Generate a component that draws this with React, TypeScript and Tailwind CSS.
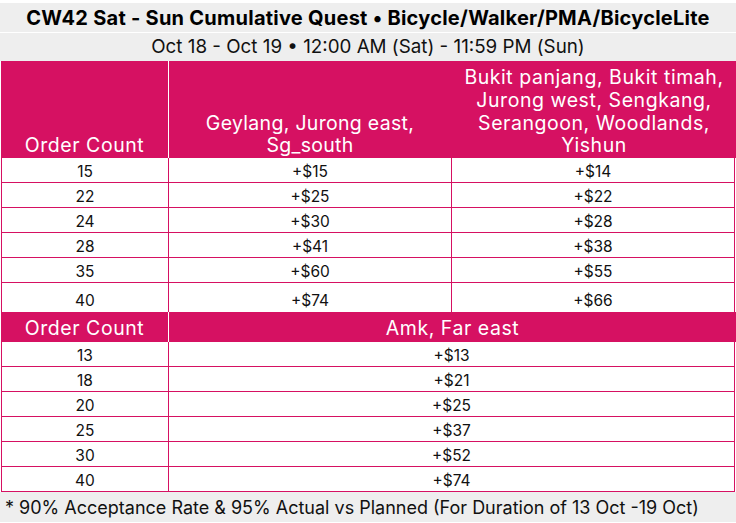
import React from "react";

const PINK = "bg-[#d61162]";

const top = [
  ["15", "+$15", "+$14"],
  ["22", "+$25", "+$22"],
  ["24", "+$30", "+$28"],
  ["28", "+$41", "+$38"],
  ["35", "+$60", "+$55"],
];

const bottom = [
  ["13", "+$13"],
  ["18", "+$21"],
  ["20", "+$25"],
  ["25", "+$37"],
  ["30", "+$52"],
  ["40", "+$74"],
];

export default function App() {
  return (
    <div
      className="w-[736px] h-[523px] bg-white text-[#111]"
      style={{ fontFamily: "Inter, 'Open Sans', sans-serif" }}
    >
      <div className="pt-[3px]">
        <div className="h-[29px] bg-[#eeeeee] flex items-center justify-center text-[20px] tracking-[0.25px] font-bold text-black">
          CW42 Sat - Sun Cumulative Quest • Bicycle/Walker/PMA/BicycleLite
        </div>
        <div className="h-[1px] bg-white" />
        <div className="h-[28px] bg-[#eeeeee] flex items-center justify-center text-[18.8px]">
          Oct 18 - Oct 19 • 12:00 AM (Sat) - 11:59 PM (Sun)
        </div>
      </div>
      <div className="ml-[1px] w-[735px]">
        <div className={`grid grid-cols-[168px_283px_1fr] h-[97px] ${PINK} text-white text-[19.5px] tracking-[0.55px] leading-[22.7px]`}>
          <div className="flex items-end justify-center pb-[1px] border-r border-white">Order Count</div>
          <div className="flex items-end justify-center pb-[1px] border-r border-[#d61162] text-center tracking-[0.3px]">
            Geylang, Jurong east,<br />Sg_south
          </div>
          <div className="flex items-end justify-center pb-[1px] text-center">
            Bukit panjang, Bukit timah,<br />Jurong west, Sengkang,<br />Serangoon, Woodlands,<br />Yishun
          </div>
        </div>
        <div className="border-l border-r border-[#d61162] w-[734px] text-[15.5px]">
          {top.map((r) => (
            <div key={r[0]} className="grid grid-cols-[167px_283px_1fr] h-[25px] border-b border-[#d61162]">
              <div className="flex items-center justify-center pt-[2px] border-r border-[#d61162]">{r[0]}</div>
              <div className="flex items-center justify-center pt-[2px] border-r border-[#d61162]">{r[1]}</div>
              <div className="flex items-center justify-center pt-[2px]">{r[2]}</div>
            </div>
          ))}
          <div className="grid grid-cols-[167px_283px_1fr] h-[29px]">
            <div className="flex items-end justify-center pb-[0px] border-r border-[#d61162]">40</div>
            <div className="flex items-end justify-center pb-[0px] border-r border-[#d61162]">+$74</div>
            <div className="flex items-end justify-center pb-[0px]">+$66</div>
          </div>
        </div>
        <div className={`grid grid-cols-[168px_1fr] h-[30px] ${PINK} text-white text-[19.5px] tracking-[0.55px]`}>
          <div className="flex items-center justify-center pt-[2px] border-r border-white">Order Count</div>
          <div className="flex items-center justify-center pt-[2px]">Amk, Far east</div>
        </div>
        <div className="border-l border-r border-[#d61162] w-[734px] text-[15.5px]">
          {bottom.map((r) => (
            <div key={r[0]} className="grid grid-cols-[167px_1fr] h-[25px] border-b border-[#d61162]">
              <div className="flex items-center justify-center pt-[2px] border-r border-[#d61162]">{r[0]}</div>
              <div className="flex items-center justify-center pt-[2px]">{r[1]}</div>
            </div>
          ))}
        </div>
      </div>
      <div className="h-[30px] bg-[#eeeeee] flex items-center pl-[5px] text-[18px] w-[736px]">
        * 90% Acceptance Rate &amp; 95% Actual vs Planned (For Duration of 13 Oct -19 Oct)
      </div>
    </div>
  );
}
